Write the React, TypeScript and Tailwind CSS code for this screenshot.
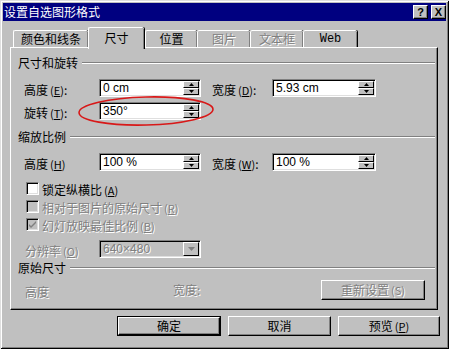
import React from "react";

const font = { fontFamily: '"Noto Sans CJK SC", "Liberation Sans", sans-serif' };

const dis = "text-[#808080] [text-shadow:1px_1px_0_#ffffff]";

function U({ c }: { c: string }) {
  return <span className="underline underline-offset-[1px]">{c}</span>;
}

function Label({ text, k, colon = true, disabled = false }: { text: string; k?: string; colon?: boolean; disabled?: boolean }) {
  return (
    <span className={`text-[12px] leading-none whitespace-nowrap ${disabled ? dis : "text-black"}`}>
      {text}
      {k ? (
        <span className="text-[11px] ml-[2px]">
          (<U c={k} />)
        </span>
      ) : null}
      {colon ? ":" : ""}
    </span>
  );
}

function Spinner() {
  return (
    <div className="flex flex-col w-[16px] h-[14px] mr-[1px]">
      {[0, 1].map((i) => (
        <div
          key={i}
          className="flex-1 bg-[#c0c0c0] border-t border-l border-t-white border-l-white border-b border-r border-b-black border-r-black flex items-center justify-center"
        >
          <svg width="5" height="3" viewBox="0 0 5 3">
            {i === 0 ? <path d="M2.5 0 L5 3 L0 3 Z" fill="#000" /> : <path d="M0 0 L5 0 L2.5 3 Z" fill="#000" />}
          </svg>
        </div>
      ))}
    </div>
  );
}

function Field({ value, w, disabled = false, drop = false }: { value: string; w: number; disabled?: boolean; drop?: boolean }) {
  return (
    <div
      className={`h-[18px] flex items-center border border-t-[#808080] border-l-[#808080] border-b-white border-r-white shadow-[inset_1px_1px_0_#000,inset_-1px_-1px_0_#dfdfdf] ${disabled ? "bg-[#c0c0c0]" : "bg-white"}`}
      style={{ width: w }}
    >
      <span
        className={`flex-1 pl-[3px] text-[12px] leading-none ${disabled ? dis : "text-black"}`}
        style={{ fontFamily: '"Liberation Sans", sans-serif' }}
      >
        {value}
      </span>
      {drop ? (
        <div className="w-[16px] h-[14px] mr-[1px] bg-[#c0c0c0] border-t border-l border-t-white border-l-white border-b border-r border-b-black border-r-black flex items-center justify-center">
          <svg width="7" height="4" viewBox="0 0 7 4">
            <path d="M0 0 L7 0 L3.5 4 Z" fill="#808080" />
          </svg>
        </div>
      ) : (
        <Spinner />
      )}
    </div>
  );
}

function GroupHeader({ text }: { text: string }) {
  return (
    <div className="h-[14px] flex items-center pl-[7px] pr-[2px]">
      <span className="text-[12px] leading-none text-black whitespace-nowrap">{text}</span>
      <div className="flex-1 ml-[4px] h-[2px] border-t border-t-[#808080] border-b border-b-white" />
    </div>
  );
}

function Check({ label, k, checked = false, disabled = false }: { label: string; k: string; checked?: boolean; disabled?: boolean }) {
  return (
    <div className="h-[14px] flex items-center pl-[15px]">
      <div
        className={`w-[13px] h-[13px] border border-t-[#808080] border-l-[#808080] border-b-white border-r-white shadow-[inset_1px_1px_0_#000,inset_-1px_-1px_0_#dfdfdf] flex items-center justify-center ${disabled ? "bg-[#c0c0c0]" : "bg-white"}`}
      >
        {checked ? (
          <svg width="7" height="7" viewBox="0 0 7 7">
            <path d="M0 3 L2 5 L7 0 L7 2 L2 7 L0 5 Z" fill="#808080" />
          </svg>
        ) : null}
      </div>
      <span className="ml-[3px]">
        <Label text={label} k={k} colon={false} disabled={disabled} />
      </span>
    </div>
  );
}

function Btn({ children, w, def = false, disabled = false }: { children: React.ReactNode; w: number; def?: boolean; disabled?: boolean }) {
  return (
    <div
      className={`h-[20px] flex items-center justify-center bg-[#c0c0c0] ${def ? "border border-black" : ""}`}
      style={{ width: w }}
    >
      <div className="w-full h-full flex items-center justify-center border-t border-l border-t-white border-l-white border-b border-r border-b-black border-r-black shadow-[inset_-1px_-1px_0_#808080]">
        <span className={`text-[12px] leading-none ${disabled ? dis : "text-black"}`}>{children}</span>
      </div>
    </div>
  );
}

function Tab({ label, w, selected = false, disabled = false, mono = false }: { label: string; w: number; selected?: boolean; disabled?: boolean; mono?: boolean }) {
  return (
    <div
      className={`relative flex items-center justify-center bg-[#c0c0c0] border-t border-l border-t-white border-l-white rounded-tl-[2px] rounded-tr-[2px] shadow-[inset_-1px_0_0_#808080,1px_0_0_#000] ${selected ? "h-[22px] -mb-[2px] z-10 pb-[2px]" : "h-[17px]"}`}
      style={{ width: w }}
    >
      <span
        className={`text-[12px] leading-none ${disabled ? dis : "text-black"}`}
        style={mono ? { fontFamily: '"Liberation Mono", monospace', fontSize: 12 } : undefined}
      >
        {label}
      </span>
    </div>
  );
}

export default function App() {
  return (
    <div
      className="relative w-[449px] h-[349px] bg-[#c0c0c0] p-[3px] shadow-[inset_1px_1px_0_#dfdfdf,inset_-1px_-1px_0_#000,inset_2px_2px_0_#fff,inset_-2px_-2px_0_#808080] overflow-hidden"
      style={font}
    >
      {/* title bar */}
      <div className="h-[18px] bg-[#000080] flex items-center justify-between pl-[1px] pr-[0px]">
        <span className="text-white text-[12px] leading-none">设置自选图形格式</span>
        <div className="flex items-center gap-[3px]">
          {["?", "X"].map((c) => (
            <div
              key={c}
              className="w-[15px] h-[14px] bg-[#c0c0c0] border-t border-l border-t-white border-l-white border-b border-r border-b-black border-r-black shadow-[inset_-1px_-1px_0_#808080] flex items-center justify-center"
            >
              <span className="text-black text-[11px] font-bold leading-none" style={{ fontFamily: '"Liberation Sans", sans-serif' }}>
                {c}
              </span>
            </div>
          ))}
        </div>
      </div>

      {/* tabs */}
      <div className="mt-[6px] h-[20px] flex items-end pl-[10px]">
        <Tab label="颜色和线条" w={75} />
        <Tab label="尺寸" w={56} selected />
        <div className="w-[1px]" />
        <Tab label="位置" w={52} />
        <Tab label="图片" w={53} disabled />
        <Tab label="文本框" w={53} disabled />
        <Tab label="Web" w={54} mono />
      </div>

      {/* panel */}
      <div className="ml-[7px] w-[428px] h-[263px] border-t border-l border-t-white border-l-white border-b border-r border-b-black border-r-black shadow-[inset_-1px_-1px_0_#808080] flex flex-col">
        <div className="h-[8px]" />
        <GroupHeader text="尺寸和旋转" />
        <div className="mt-[9px] h-[18px] flex items-center pl-[13px]">
          <div className="w-[75px]">
            <Label text="高度" k="E" />
          </div>
          <Field value="0 cm" w={102} />
          <div className="w-[11px]" />
          <div className="w-[60px]">
            <Label text="宽度" k="D" />
          </div>
          <Field value="5.93 cm" w={104} />
        </div>
        <div className="mt-[5px] h-[18px] flex items-center pl-[13px]">
          <div className="w-[75px]">
            <Label text="旋转" k="T" />
          </div>
          <Field value="350°" w={102} />
        </div>

        <div className="mt-[10px]" />
        <GroupHeader text="缩放比例" />
        <div className="mt-[9px] h-[18px] flex items-center pl-[13px]">
          <div className="w-[75px]">
            <Label text="高度" k="H" colon={false} />
          </div>
          <Field value="100 %" w={102} />
          <div className="w-[11px]" />
          <div className="w-[60px]">
            <Label text="宽度" k="W" />
          </div>
          <Field value="100 %" w={104} />
        </div>
        <div className="mt-[10px]" />
        <Check label="锁定纵横比" k="A" />
        <div className="mt-[4px]" />
        <Check label="相对于图片的原始尺寸" k="R" disabled />
        <div className="mt-[4px]" />
        <Check label="幻灯放映最佳比例" k="B" checked disabled />
        <div className="mt-[9px] h-[18px] flex items-center pl-[14px]">
          <div className="w-[74px]">
            <Label text="分辨率" k="O" colon={false} disabled />
          </div>
          <Field value="640×480" w={102} disabled drop />
        </div>
        <div className="mt-[3px]" />
        <GroupHeader text="原始尺寸" />
        <div className="mt-[5px] h-[19px] flex items-center pl-[14px]">
          <div className="w-[148px]">
            <Label text="高度" colon={false} disabled />
          </div>
          <Label text="宽度" colon disabled />
          <div className="flex-1" />
          <div className="mr-[12px]">
            <Btn w={104} disabled>
              重新设置<span className="text-[11px] ml-[2px]">(S)</span>
            </Btn>
          </div>
        </div>
      </div>

      {/* bottom buttons */}
      <div className="mt-[6px] flex items-center pl-[114px] gap-[7px]">
        <Btn w={104} def>
          确定
        </Btn>
        <Btn w={103}>取消</Btn>
        <Btn w={102}>
          预览<span className="text-[11px] ml-[2px]">
            (<U c="P" />)
          </span>
        </Btn>
      </div>

      {/* red annotation ellipse */}
      <svg className="absolute left-[76px] top-[95px] pointer-events-none" width="140" height="34" viewBox="0 0 140 34">
        <ellipse cx="70" cy="16" rx="67" ry="14" fill="none" stroke="#d81818" strokeWidth="1.6" transform="rotate(-1.5 70 16)" />
      </svg>
    </div>
  );
}
